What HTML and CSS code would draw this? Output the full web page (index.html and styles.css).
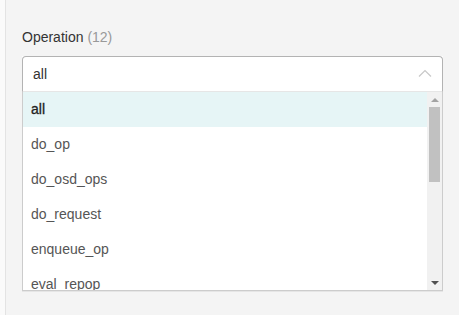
FILE: index.html
```html
<!DOCTYPE html>
<html lang="en">
<head>
    <meta charset="UTF-8">
    <meta name="viewport" content="width=device-width, initial-scale=1.0">
    <title>Operation filter</title>

    <link rel="stylesheet" href="styles.css">

</head>
<body>
    <div class="panel">

        <div class="field">
            <label class="field-label" for="operation">Operation <span class="count">(12)</span></label>

            <div class="select is-open">
                <div class="select-control" id="operation">
                    <span class="select-value">all</span>
                    <svg class="caret" width="14" height="8" viewBox="0 0 14 8">
                        <polyline points="1,7.5 7,1.5 13,7.5" fill="none" stroke="#c8c8c8" stroke-width="1.2"/>
                    </svg>
                </div>

                <div class="select-menu">
                    <ul class="options">
                        <li class="option is-focused">all</li>
                        <li class="option">do_op</li>
                        <li class="option">do_osd_ops</li>
                        <li class="option">do_request</li>
                        <li class="option">enqueue_op</li>
                        <li class="option">eval_repop</li>
                        <li class="option">execute_ctx</li>
                        <li class="option">get_object_context</li>
                        <li class="option">handle_message</li>
                        <li class="option">issue_repop</li>
                        <li class="option">log_operation</li>
                        <li class="option">queue_transactions</li>
                    </ul>

                    <!-- scrollbar drawn by hand, headless has overlay bars -->
                    <div class="scrollbar">
                        <span class="scroll-btn up"></span>
                        <div class="scroll-track">
                            <span class="scroll-thumb"></span>
                        </div>
                        <span class="scroll-btn down"></span>
                    </div>
                </div>
            </div>
        </div>

        <div class="field">
            <label class="field-label">Lookback</label>
        </div>

    </div>
</body>
</html>
```

FILE: styles.css
```css
*{
    margin: 0;
    padding: 0;
    box-sizing: border-box;
}

html, body{
    height: 100%;
    overflow: hidden;
}

body{
    background: #fafafa;
    color: #333;
    font-family: 'Liberation Sans', Arial, sans-serif;
    font-size: 14px;
    padding-left: 5px;
}

.panel{
    min-height: 100%;
    background: #f4f4f4;
    border-left: 1px solid #e3e3e3;
    padding: 27px 16px 0 16px;
}

.field{
    margin-bottom: 21px;
}

.field-label{
    display: block;
    line-height: 20px;
    margin-bottom: 9px;
    color: #333;
}

.count{
    color: #999;
}

/* select */
.select{
    background: #fff;
}

.select-control{
    display: flex;
    align-items: center;
    justify-content: space-between;
    height: 36px;
    padding: 0 10px 0 10px;
    border: 1px solid #b3b3b3;
    border-bottom-color: #e6e6e6;
    border-radius: 4px 4px 0 0;
    background: #fff;
}

.select-value{
    color: #333;
    line-height: 34px;
}

.caret{
    display: block;
    margin-top: -2px;
}

.select-menu{
    display: flex;
    height: 199px;
    border: 1px solid #ccc;
    border-top: none;
    box-shadow: 0 1px 0 rgba(0, 0, 0, 0.06);
    background: #fff;
}

.options{
    flex: 1;
    list-style: none;
    overflow: hidden;
}

.option{
    height: 35px;
    line-height: 35px;
    padding-left: 8px;
    color: #555;
}

.option.is-focused{
    background: #e6f5f6;
    color: #222;
    -webkit-text-stroke: 0.3px #222;
}

/* scrollbar */
.scrollbar{
    width: 15px;
    display: flex;
    flex-direction: column;
    background: #f1f1f1;
}

.scroll-btn{
    height: 15px;
    display: flex;
    align-items: center;
    justify-content: center;
}

.scroll-btn::before{
    content: '';
    border-left: 4px solid transparent;
    border-right: 4px solid transparent;
}

.scroll-btn.up::before{
    border-bottom: 4px solid #a3a3a3;
}

.scroll-btn.down::before{
    border-top: 4px solid #505050;
}

.scroll-track{
    flex: 1;
    padding: 0 2px;
}

.scroll-thumb{
    display: block;
    height: 75px;
    background: #c1c1c1;
}
```
